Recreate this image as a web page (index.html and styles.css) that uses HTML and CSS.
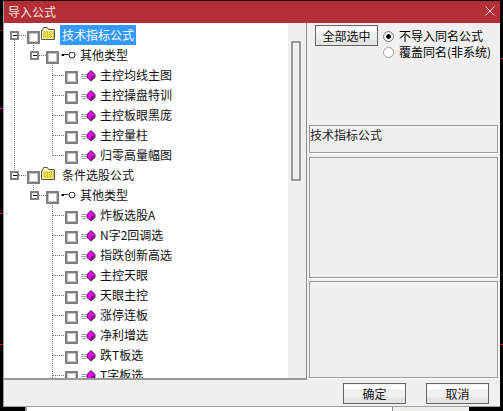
FILE: index.html
```html
<!DOCTYPE html>
<html lang="zh">
<head>
<meta charset="utf-8">
<title>导入公式</title>
<link rel="stylesheet" href="styles.css">
</head>
<body>
<svg class="defs" width="0" height="0" aria-hidden="true">
  <defs>
    <g id="minus"><path d="M1 1h7v7H1z" fill="#fff" stroke="#808080" stroke-width="2" shape-rendering="crispEdges"/><path d="M2.500 4.500h4" stroke="#000" shape-rendering="crispEdges"/></g>
    <g id="root-first"><use href="#minus" x="6" y="6"/><path class="dot" d="M15 10.500h8M10.500 15v5"/></g>
    <g id="root-last"><path class="dot" d="M10.500 0v6M15 10.500h8"/><use href="#minus" x="6" y="6"/></g>
    <g id="type-cont"><path class="dot" d="M10.500 0v20M29.500 0v6M35 10.500h7M48.500 19v1"/><use href="#minus" x="26" y="6"/></g>
    <g id="type-end"><path class="dot" d="M29.500 0v6M35 10.500h7M48.500 19v1"/><use href="#minus" x="26" y="6"/></g>
    <g id="leaf-cont"><path class="dot" d="M10.500 0v20M48.500 0v20M48.500 10.500h12"/></g>
    <g id="leaf-cont-last"><path class="dot" d="M10.500 0v20M48.500 0v11M48.500 10.500h12"/></g>
    <g id="leaf-end"><path class="dot" d="M48.500 0v20M48.500 10.500h12"/></g>
    <g id="key"><path d="M0 3h1M2 2.500h5.500" stroke="#333" fill="none"/><circle cx="11" cy="3" r="3" fill="#fff" stroke="#222"/><path d="M1 2h2v2H1z" fill="#000"/></g>
    <g id="gem">
      <path d="M0 4.500h5M0 6.500h5M1 8.500h4" stroke="#a0a0a0" shape-rendering="crispEdges"/>
      <path d="M10 .5l4 4v3l-4 3.500-4-3.500v-3z" fill="#ee00ee" stroke="#222" stroke-width=".9"/>
      <path d="M10 10.500V6.500l3.500-1.500v2.500z" fill="#8a008a"/>
    </g>
    <g id="folder">
      <path d="M.5 3.500v9h13v-10h-6l-1-2h-4l-1 3z" fill="#fff8d0" stroke="#555"/>
      <path d="M2 4h11v7.500H2z" fill="#f2e94a"/>
      <path d="M2 5.500h11M2 7.500h11M2 9.500h11M3.500 4v8M6.500 4v8M9.500 4v8M12 4v8" stroke="#c8c04a" stroke-dasharray="1 1" shape-rendering="crispEdges"/>
    </g>
  </defs>
</svg>
<div class="dialog">
  <header class="titlebar">
    <span class="title">导入公式</span>
    <svg class="close" width="10" height="10" viewBox="0 0 10 10"><path d="M.5.500l9 9M9.500.500l-9 9" stroke="#f1d9da" fill="none"/></svg>
  </header>
  <div class="body">
    <div class="left">
      <div class="tree">
        <div class="row"><svg class="guide g1" width="23" height="20"><use href="#root-first"/></svg><span class="check"></span><svg class="folder" width="15" height="14"><use href="#folder"/></svg><span class="label sel">技术指标公式</span></div>
        <div class="row"><svg class="guide g2" width="42" height="20"><use href="#type-cont"/></svg><span class="check"></span><svg class="key" width="15" height="7"><use href="#key"/></svg><span class="label">其他类型</span></div>
        <div class="row"><svg class="guide g3" width="61" height="20"><use href="#leaf-cont"/></svg><span class="check"></span><svg class="gem" width="17" height="12"><use href="#gem"/></svg><span class="label">主控均线主图</span></div>
        <div class="row"><svg class="guide g3" width="61" height="20"><use href="#leaf-cont"/></svg><span class="check"></span><svg class="gem" width="17" height="12"><use href="#gem"/></svg><span class="label">主控操盘特训</span></div>
        <div class="row"><svg class="guide g3" width="61" height="20"><use href="#leaf-cont"/></svg><span class="check"></span><svg class="gem" width="17" height="12"><use href="#gem"/></svg><span class="label">主控板眼黑庞</span></div>
        <div class="row"><svg class="guide g3" width="61" height="20"><use href="#leaf-cont"/></svg><span class="check"></span><svg class="gem" width="17" height="12"><use href="#gem"/></svg><span class="label">主控量柱</span></div>
        <div class="row"><svg class="guide g3" width="61" height="20"><use href="#leaf-cont-last"/></svg><span class="check"></span><svg class="gem" width="17" height="12"><use href="#gem"/></svg><span class="label">归零高量幅图</span></div>
        <div class="row"><svg class="guide g1" width="23" height="20"><use href="#root-last"/></svg><span class="check"></span><svg class="folder" width="15" height="14"><use href="#folder"/></svg><span class="label">条件选股公式</span></div>
        <div class="row"><svg class="guide g2" width="42" height="20"><use href="#type-end"/></svg><span class="check"></span><svg class="key" width="15" height="7"><use href="#key"/></svg><span class="label">其他类型</span></div>
        <div class="row"><svg class="guide g3" width="61" height="20"><use href="#leaf-end"/></svg><span class="check"></span><svg class="gem" width="17" height="12"><use href="#gem"/></svg><span class="label">炸板选股A</span></div>
        <div class="row"><svg class="guide g3" width="61" height="20"><use href="#leaf-end"/></svg><span class="check"></span><svg class="gem" width="17" height="12"><use href="#gem"/></svg><span class="label">N字2回调选</span></div>
        <div class="row"><svg class="guide g3" width="61" height="20"><use href="#leaf-end"/></svg><span class="check"></span><svg class="gem" width="17" height="12"><use href="#gem"/></svg><span class="label">指跌创新高选</span></div>
        <div class="row"><svg class="guide g3" width="61" height="20"><use href="#leaf-end"/></svg><span class="check"></span><svg class="gem" width="17" height="12"><use href="#gem"/></svg><span class="label">主控天眼</span></div>
        <div class="row"><svg class="guide g3" width="61" height="20"><use href="#leaf-end"/></svg><span class="check"></span><svg class="gem" width="17" height="12"><use href="#gem"/></svg><span class="label">天眼主控</span></div>
        <div class="row"><svg class="guide g3" width="61" height="20"><use href="#leaf-end"/></svg><span class="check"></span><svg class="gem" width="17" height="12"><use href="#gem"/></svg><span class="label">涨停连板</span></div>
        <div class="row"><svg class="guide g3" width="61" height="20"><use href="#leaf-end"/></svg><span class="check"></span><svg class="gem" width="17" height="12"><use href="#gem"/></svg><span class="label">净利增选</span></div>
        <div class="row"><svg class="guide g3" width="61" height="20"><use href="#leaf-end"/></svg><span class="check"></span><svg class="gem" width="17" height="12"><use href="#gem"/></svg><span class="label">跌T板选</span></div>
        <div class="row"><svg class="guide g3" width="61" height="20"><use href="#leaf-end"/></svg><span class="check"></span><svg class="gem" width="17" height="12"><use href="#gem"/></svg><span class="label">T字板选</span></div>
      </div>
      <div class="scrolltrack"><div class="thumb"></div></div>
    </div>
    <aside class="right">
      <div class="controls">
        <button class="btn selectall" type="button">全部选中</button>
        <div class="radios">
          <div class="radio on"><span class="dot-radio"></span>不导入同名公式</div>
          <div class="radio"><span class="dot-radio"></span>覆盖同名(非系统)</div>
        </div>
      </div>
      <div class="box box-name">技术指标公式</div>
      <div class="box box-mid"></div>
      <div class="box box-low"></div>
    </aside>
  </div>
  <footer class="actions">
    <button class="btn act" type="button">确定</button>
    <button class="btn act" type="button">取消</button>
  </footer>
</div>
<div class="under">
  <span class="u-a"></span><span class="u-b"></span><span class="u-c"></span><span class="u-d"></span>
</div>
</body>
</html>
```
FILE: styles.css
```css
* { box-sizing: border-box; }
html, body { margin: 0; height: 100%; }
body {
  width: 503px;
  height: 411px;
  overflow: hidden;
  padding-top: 1px;
  font: 12px/20px "Noto Sans CJK SC", "Liberation Sans", sans-serif;
  color: #000;
  background:
    linear-gradient(#ff0000, #ff0000) 0 213px / 3px 1px no-repeat,
    linear-gradient(#e000c0, #e000c0) 0 108px / 3px 1px no-repeat,
    linear-gradient(#a01020, #a01020) 0 30px / 3px 1px no-repeat,
    linear-gradient(#ff0000, #ff0000) 0 344px / 3px 1px no-repeat,
    linear-gradient(#ff0000, #ff0000) 500px 58px / 3px 1px no-repeat,
    linear-gradient(#ff0000, #ff0000) 500px 344px / 3px 1px no-repeat,
    #000;
}
.defs { display: block; height: 0; }
.dot { stroke: #707070; stroke-dasharray: 1 1; fill: none; shape-rendering: crispEdges; }

.dialog {
  width: 497px;
  height: 406px;
  margin-left: 3px;
  display: flex;
  flex-direction: column;
  background: #f0f0f0;
  border-left: 1px solid #a0a0a0;
  border-bottom: 1px solid #a0a0a0;
}
.titlebar {
  height: 22px;
  flex: none;
  background: #b23035;
  display: flex;
  align-items: center;
  justify-content: space-between;
  padding: 0 5px 0 4px;
  color: #f4e3e3;
}
.close { margin-bottom: 2px; }

.body { flex: none; height: 357px; display: flex; }
.left {
  width: 303px;
  flex: none;
  display: flex;
  border-right: 1px solid #8c8c8c;
  border-bottom: 2px solid #9a9a9a;
}
.tree {
  width: 284px;
  flex: none;
  background: #fff;
  overflow: hidden;
  padding-top: 2px;
}
.row { display: flex; height: 20px; align-items: flex-start; }
.guide { flex: none; display: block; }
.check {
  flex: none;
  width: 13px;
  height: 13px;
  margin-top: 6px;
  background: #fff;
  border: 2px solid #808080;
  box-shadow: inset 0 0 0 1px #c4c4c4;
}
.folder { flex: none; margin: 2px 0 0 1px; }
.key { flex: none; margin: 7px 0 0 2px; }
.gem { flex: none; margin: 5px 0 0 3px; }
.label { white-space: nowrap; margin-left: 5px; color: #111; height: 20px; }
.folder + .label { margin-left: 4px; padding: 0 2px; }
.key + .label { margin-left: 4px; }
.gem + .label { margin-left: 2px; }
.sel { background: #3399ff; color: #fff; }

.scrolltrack { flex: 1; padding: 18px 5px 0 3px; }
.thumb { height: 140px; background: #f0f0f0; border: 2px solid #9a9a9a; }

.right { flex: 1; min-width: 0; padding: 2px 2px 0 2px; display: flex; flex-direction: column; }
.controls { height: 100px; flex: none; display: flex; align-items: flex-start; padding-left: 6px; }
.btn {
  font: inherit;
  line-height: 1;
  color: #111;
  padding: 0;
  border: 1px solid #666;
  background: linear-gradient(#f0f0f0 0, #fff 2px, #fff 5px, #f0f0f0 6px, #f0f0f0 13px, #e4e4e4 14px, #e4e4e4 100%);
}
.selectall { width: 63px; height: 21px; }
.radios { margin: 3px 0 0 5px; }
.radio { display: flex; align-items: center; height: 16px; }
.dot-radio {
  width: 11px;
  height: 11px;
  margin-right: 5px;
  border-radius: 50%;
  background: #fff;
  border: 1px solid #a0a0a0;
}
.radio.on .dot-radio { background: radial-gradient(circle, #000 0, #000 2px, #f0f0f0 2.6px); border-color: #808080; }
.box {
  flex: none;
  border: 1px solid #9a9a9a;
  box-shadow: 0 1px 0 #fff, 1px 0 0 #fff;
  background: #f0f0f0;
}
.box-name { height: 28px; margin-bottom: 4px; line-height: 18px; color: #222; }
.box-mid { height: 121px; margin-bottom: 3px; }
.box-low { height: 97px; }

.actions { flex: 1; display: flex; justify-content: flex-end; align-items: flex-start; gap: 20px; padding: 3px 11px 0 0; }
.act { width: 63px; height: 21px; }

.under { display: flex; height: 4px; }
.u-a { width: 27px; background: #000; border-right: 2px solid #9a9a9a; }
.u-b { width: 366px; background: #fff; border-right: 1px solid #8a8a8a; }
.u-c { width: 76px; background: #eeeeea; border-left: 10px solid #f0f0f0; border-right: 8px solid #f0f0f0; }
```
